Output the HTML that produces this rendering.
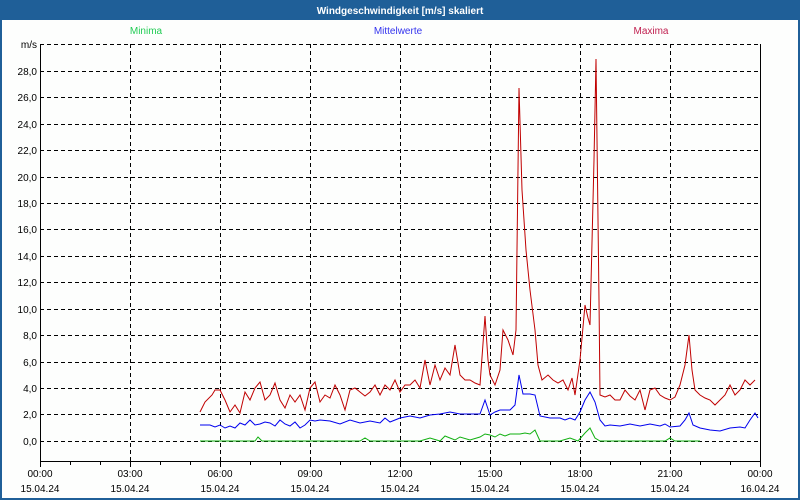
<!DOCTYPE html>
<html><head><meta charset="utf-8"><style>
html,body{margin:0;padding:0;width:800px;height:500px;overflow:hidden;background:#fff}
svg{display:block}
text{font-family:"Liberation Sans","DejaVu Sans",sans-serif;font-size:10px}
</style></head><body>
<svg width="800" height="500" xmlns="http://www.w3.org/2000/svg">
<rect x="0" y="0" width="800" height="500" fill="#1f5f98"/>
<rect x="2" y="20" width="796" height="478" fill="#fdfefd"/>
<text x="400" y="14" fill="#fff" font-weight="bold" text-anchor="middle" font-size="11">Windgeschwindigkeit [m/s] skaliert</text>
<text x="146" y="34" fill="#22cc55" text-anchor="middle">Minima</text>
<text x="398" y="34" fill="#3333ee" text-anchor="middle">Mittelwerte</text>
<text x="651" y="34" fill="#c02050" text-anchor="middle">Maxima</text>
<g stroke="#000" stroke-width="1" stroke-dasharray="4,3" fill="none">
<path d="M40 44.5H760M40 71.5H760M40 97.5H760M40 124.5H760M40 150.5H760M40 177.5H760M40 203.5H760M40 229.5H760M40 256.5H760M40 282.5H760M40 309.5H760M40 335.5H760M40 362.5H760M40 388.5H760M40 414.5H760M40 441.5H760"/>
<path d="M130.5 44V461M220.5 44V461M310.5 44V461M400.5 44V461M490.5 44V461M580.5 44V461M670.5 44V461"/>
</g>
<path d="M40.5 44V461.5H760.5V44" stroke="#000" fill="none"/>
<g stroke="#000"><path d="M70.5 461V465M100.5 461V465M130.5 461V467M160.5 461V465M190.5 461V465M220.5 461V467M250.5 461V465M280.5 461V465M310.5 461V467M340.5 461V465M370.5 461V465M400.5 461V467M430.5 461V465M460.5 461V465M490.5 461V467M520.5 461V465M550.5 461V465M580.5 461V467M610.5 461V465M640.5 461V465M670.5 461V467M700.5 461V465M730.5 461V465M760.5 461V467M40.5 461V467"/></g>
<g text-anchor="end" fill="#000">
<text x="37" y="48">m/s</text><text x="37" y="75">28,0</text><text x="37" y="101">26,0</text><text x="37" y="128">24,0</text><text x="37" y="154">22,0</text><text x="37" y="181">20,0</text><text x="37" y="207">18,0</text><text x="37" y="233">16,0</text><text x="37" y="260">14,0</text><text x="37" y="286">12,0</text><text x="37" y="313">10,0</text><text x="37" y="339">8,0</text><text x="37" y="366">6,0</text><text x="37" y="392">4,0</text><text x="37" y="418">2,0</text><text x="37" y="445">0,0</text>
</g>
<g text-anchor="middle" fill="#000">
<text x="40" y="477">00:00</text><text x="40" y="492">15.04.24</text>
<text x="130" y="477">03:00</text><text x="130" y="492">15.04.24</text>
<text x="220" y="477">06:00</text><text x="220" y="492">15.04.24</text>
<text x="310" y="477">09:00</text><text x="310" y="492">15.04.24</text>
<text x="400" y="477">12:00</text><text x="400" y="492">15.04.24</text>
<text x="490" y="477">15:00</text><text x="490" y="492">15.04.24</text>
<text x="580" y="477">18:00</text><text x="580" y="492">15.04.24</text>
<text x="670" y="477">21:00</text><text x="670" y="492">15.04.24</text>
<text x="760" y="477">00:00</text><text x="760" y="492">16.04.24</text>
</g>
<polyline fill="none" stroke="#10b010" points="200,441 255,441 258,437 262,441 360,441 365,438 370,441 420,441 430,438 440,441 445,436 450,438 455,440 460,437 470,440 480,437 485,434 490,435 495,437 500,434 505,436 510,434 520,434 525,433 530,434 535,430 540,441 560,441 570,438 578,441 585,433 590,428 595,438 600,441 640,441 665,441 670,438 675,441 700,441"/>
<polyline fill="none" stroke="#0000ee" points="200,425 210,425 215,427 220,425 225,428 230,426 235,428 240,423 245,425 250,420 255,425 260,424 265,422 270,423 275,426 280,420 285,424 290,426 295,422 300,428 305,425 310,420 315,421 320,420 330,421 340,424 350,420 360,423 370,421 380,423 385,418 390,422 400,418 410,416 420,418 430,415 440,414 450,412 460,414 470,414 480,414 485,400 490,415 495,412 500,410 510,410 515,405 519,375 523,394 530,394 535,395 540,416 550,418 560,418 565,420 570,418 575,420 580,412 585,400 590,392 595,402 600,420 605,426 610,425 620,426 630,424 640,426 650,424 660,426 665,424 670,427 680,426 685,420 689,413 693,425 700,428 710,430 720,431 730,428 740,427 745,428 750,420 755,413 758,418"/>
<polyline fill="none" stroke="#c00000" points="200,412 205,402 212,395 215,390 220,390 225,400 230,412 235,405 240,413 245,392 250,400 255,388 260,382 265,400 270,395 275,383 280,400 285,408 290,395 295,402 300,395 305,410 310,388 315,382 320,402 325,395 330,398 335,385 340,395 345,410 350,390 355,388 360,392 365,396 370,392 375,385 380,395 385,385 390,390 395,380 400,392 405,385 410,385 415,380 420,388 425,360 430,385 435,365 440,380 445,368 450,375 455,345 460,375 465,380 470,380 475,383 480,385 485,316 488,360 490,375 495,385 500,370 503,330 508,340 513,355 516,330 519,88 522,190 526,250 530,290 535,330 538,365 542,380 548,375 553,380 558,383 563,380 568,390 572,378 575,395 580,360 585,305 588,318 590,325 594,160 596,59 599,300 600,395 605,397 610,395 615,400 620,400 625,390 630,396 635,400 640,390 645,410 650,390 655,388 660,395 665,398 670,400 675,397 680,385 685,365 689,335 692,370 695,390 700,395 705,398 710,400 715,405 720,400 725,395 730,385 735,395 740,390 745,380 750,385 755,380"/>
</svg>
</body></html>
